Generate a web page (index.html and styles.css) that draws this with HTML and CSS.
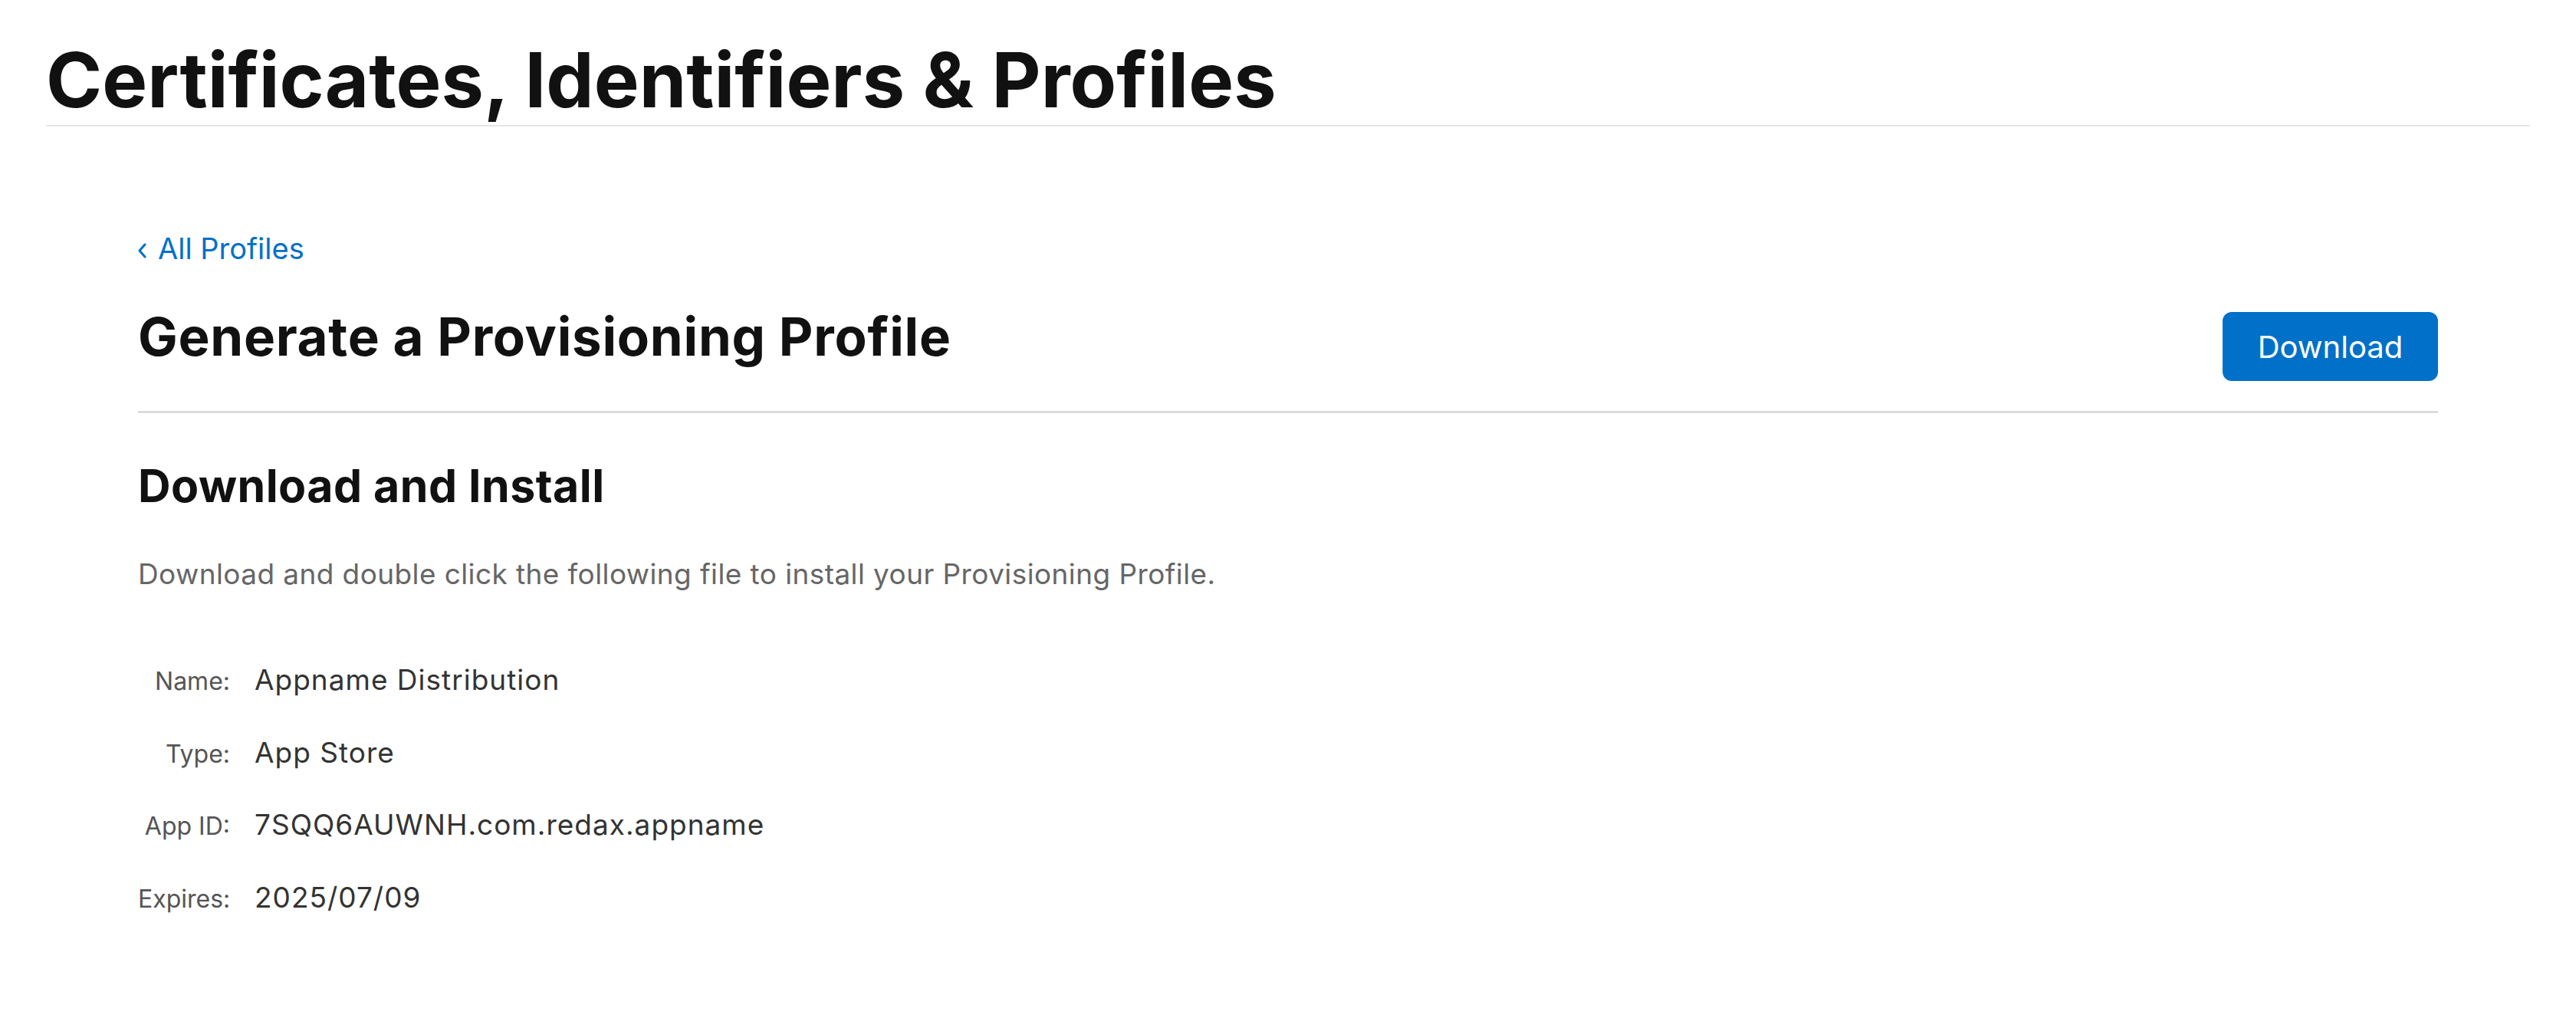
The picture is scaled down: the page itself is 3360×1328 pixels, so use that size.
FILE: index.html
```html
<!DOCTYPE html>
<html lang="en">
<head>
    <meta charset="UTF-8">
    <meta name="viewport" content="width=device-width, initial-scale=1.0">
    <title>Certificates, Identifiers &amp; Profiles</title>
    <link rel="stylesheet" href="styles.css">
</head>
<body>

<header class="pageHeader">
    <h1 class="pageTitle">Certificates, Identifiers &amp; Profiles</h1>
</header>

<main class="content">
    <a class="backLink" href="#">
        <svg class="backChevron" width="12" height="20" viewBox="0 0 12 20" aria-hidden="true">
            <polyline points="9,2 2,10 9,18" fill="none" stroke="currentColor" stroke-width="3" stroke-linecap="round" stroke-linejoin="round"/>
        </svg>
        <span>All Profiles</span>
    </a>

    <div class="titleRow">
        <h2 class="sectionTitle">Generate a Provisioning Profile</h2>
        <button class="downloadButton">Download</button>
    </div>

    <h3 class="subTitle">Download and Install</h3>
    <p class="hint">Download and double click the following file to install your Provisioning Profile.</p>

    <dl class="details">
        <dt>Name:</dt>
        <dd>Appname Distribution</dd>
        <dt>Type:</dt>
        <dd>App Store</dd>
        <dt>App ID:</dt>
        <dd>7SQQ6AUWNH.com.redax.appname</dd>
        <dt>Expires:</dt>
        <dd>2025/07/09</dd>
    </dl>
</main>

</body>
</html>
```

FILE: styles.css
```css
body {
    margin: 0;
    font-family: Inter, "Liberation Sans", sans-serif;
    background-color: #fff;
    color: #111;
}
.pageHeader {
    padding: 0 60px;
}
.pageTitle {
    margin: 45px 0 0;
    font-size: 99px;
    line-height: 118px;
    font-weight: 700;
    letter-spacing: 0;
    border-bottom: 2px solid #e6e6e6;
}
.content {
    width: 3000px;
    margin: 0 auto;
    padding-top: 135px;
}
.backLink {
    display: inline-flex;
    align-items: center;
    gap: 14px;
    font-size: 38px;
    line-height: 48px;
    color: #0070c9;
    text-decoration: none;
}
.backChevron {
    margin-top: 6px;
}
.titleRow {
    display: flex;
    justify-content: space-between;
    align-items: flex-start;
    margin-top: 49px;
    padding-bottom: 39px;
    border-bottom: 3px solid #dcdcdc;
}
.sectionTitle {
    margin: 0;
    font-size: 69px;
    line-height: 84px;
    font-weight: 700;
    letter-spacing: 0.7px;
}
.downloadButton {
    margin-top: 10px;
    width: 281px;
    height: 90px;
    border: none;
    border-radius: 12px;
    background-color: #0070c9;
    color: #fff;
    font-family: inherit;
    font-size: 40px;
    cursor: pointer;
}
.subTitle {
    margin: 59px 0 0;
    font-size: 59px;
    line-height: 72px;
    font-weight: 700;
    letter-spacing: 0.45px;
}
.hint {
    margin: 55px 0 0;
    font-size: 37px;
    line-height: 48px;
    letter-spacing: 0.4px;
    color: #666;
}
.details {
    display: grid;
    grid-template-columns: 120px auto;
    column-gap: 32px;
    row-gap: 44.7px;
    align-items: baseline;
    margin: 90px 0 0;
}
.details dt {
    text-align: right;
    font-size: 32px;
    line-height: 48px;
    color: #555;
}
.details dd {
    margin: 0;
    font-size: 37px;
    line-height: 48px;
    letter-spacing: 1px;
    color: #333;
}
```
